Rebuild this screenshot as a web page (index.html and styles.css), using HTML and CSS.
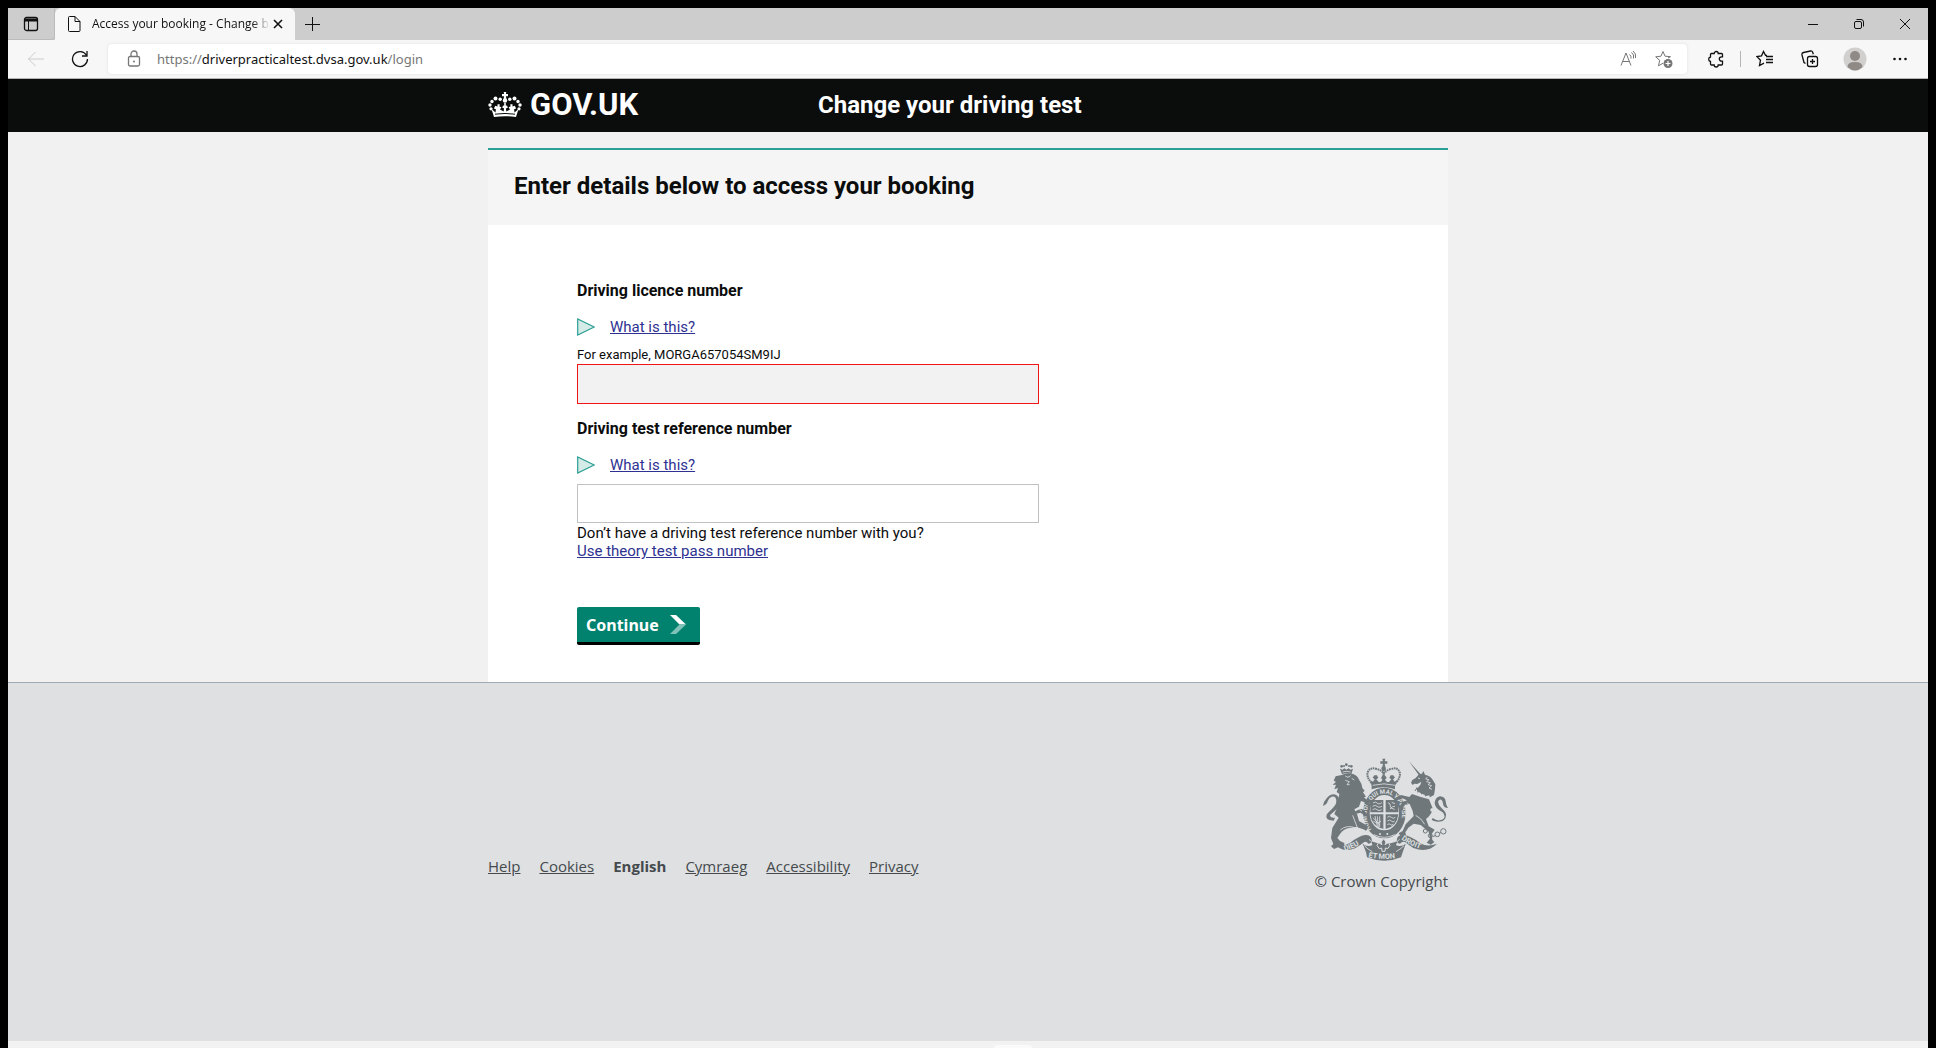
FILE: index.html
```html
<!DOCTYPE html>
<html lang="en">
<head>
<meta charset="utf-8">
<title>Access your booking - Change booking</title>
<link rel="stylesheet" href="styles.css">
</head>
<body>
<div class="window">
  <div class="tab-bar">
    <button class="tab-menu" type="button" aria-label="Tab actions">
      <svg width="16" height="16" viewBox="0 0 16 16"><rect x="1.5" y="1.5" width="13" height="13" rx="2" class="line firm"/><path d="M1.5 2.5h13v3h-13z"/><path d="M5.5 5v9.500" class="line"/></svg>
    </button>
    <div class="tab">
      <svg width="14" height="18" viewBox="0 0 14 18"><path d="M2.500 1.500h5.500l5 5v9a1 1 0 0 1-1 1H2.500a1 1 0 0 1-1-1v-13a1 1 0 0 1 1-1zM8 1.500v5h5" class="line"/></svg>
      <span class="tab-title">Access your booking - Change b</span>
      <button class="icon-button tab-close" type="button" aria-label="Close tab"><svg width="10" height="10" viewBox="0 0 10 10"><path d="M1 1l8 8M9 1l-8 8" class="line heavy"/></svg></button>
    </div>
    <button class="icon-button new-tab" type="button" aria-label="New tab"><svg width="16" height="16" viewBox="0 0 16 16"><path d="M8.500 1v14M1 8.500h15" class="line"/></svg></button>
    <div class="window-controls">
      <button class="icon-button" type="button" aria-label="Minimise"><svg width="12" height="12" viewBox="0 0 12 12"><path d="M1 6.500h10" class="line"/></svg></button>
      <button class="icon-button" type="button" aria-label="Restore"><svg width="12" height="12" viewBox="0 0 12 12"><rect x="1.500" y="3.500" width="7" height="7" rx="1.500" class="line"/><path d="M3.500 1.500H8a2.500 2.500 0 0 1 2.500 2.500v4.500" class="line"/></svg></button>
      <button class="icon-button" type="button" aria-label="Close window"><svg width="12" height="12" viewBox="0 0 12 12"><path d="M1 1l10 10M11 1L1 11" class="line"/></svg></button>
    </div>
  </div>

  <div class="toolbar">
    <div class="nav-buttons">
      <button class="icon-button disabled" type="button" aria-label="Back"><svg width="18" height="16" viewBox="0 0 18 16"><path d="M17 8H1.500M8.500 1l-7 7 7 7" class="line"/></svg></button>
      <button class="icon-button" type="button" aria-label="Refresh"><svg width="18" height="18" viewBox="0 0 18 18"><path d="M15.300 5A7.500 7.500 0 1 0 16.500 9M16 1v5h-5" class="line firm"/></svg></button>
    </div>
    <div class="address">
      <svg class="grey" width="14" height="18" viewBox="0 0 14 18"><rect x="1.500" y="6.500" width="11" height="9.500" rx="1.500" class="line firm"/><path d="M4 6.500V4a3 3 0 0 1 6 0v2.500" class="line firm"/><circle cx="7" cy="11.500" r="1"/></svg>
      <div class="url" role="textbox" aria-label="Address">https://<span class="host">driverpracticaltest.dvsa.gov.uk</span>/login</div>
      <button class="icon-button grey" type="button" aria-label="Read aloud"><svg width="18" height="18" viewBox="0 0 18 18"><path d="M2 15.500L7 3l5 12.500M3.600 11.500h6.800M10.500 4.500q2 1.500 1.500 4M12.500 2.500q3 2 2 6M14 1q3.500 2.500 2.500 7" class="line"/></svg></button>
      <button class="icon-button grey" type="button" aria-label="Add to favourites"><svg width="18" height="18" viewBox="0 0 18 18"><path d="M8 1.500l2 4.700 5.500.5M8 1.500L6 6.200l-5.300.6 4 3.500-1.200 5.500 4.500-2.600M13 8l2.500-1.300" class="line"/><circle cx="13" cy="13.500" r="4.500"/><path d="M13 11v5M10.500 13.500h5" class="cut"/></svg></button>
    </div>
    <div class="actions">
      <button class="icon-button" type="button" aria-label="Extensions"><svg width="16" height="18" viewBox="0 0 16 18"><path d="M3.500 3.500h2.700a2 2 0 0 1 4 0h3.300a1 1 0 0 1 1 1v2.300h-1a2.200 2.200 0 0 0 0 4.400h1v2.800a1 1 0 0 1-1 1h-3.300a2 2 0 0 1-4 0H3.500a1 1 0 0 1-1-1v-2.500a2.300 2.300 0 0 1 0-4.500V4.500a1 1 0 0 1 1-1z" class="line firm"/></svg></button>
      <span class="divider"></span>
      <button class="icon-button" type="button" aria-label="Favourites"><svg width="18" height="18" viewBox="0 0 18 18"><path d="M11 5.500L9.500 5.300 7.500 1.500l-2 4.300-4.500.8 3.500 3.600-1 5.300 4.500-2.300M10 6.500h7M10 9.500h7M10 12.500h7" class="line firm"/></svg></button>
      <button class="icon-button" type="button" aria-label="Collections"><svg width="18" height="18" viewBox="0 0 18 18"><rect x="6.500" y="6.500" width="10" height="10" rx="2" class="line firm"/><path d="M11.500 9v5M9 11.500h5M4.500 13.500L3 12.500 1 5q-.4-2 1.500-2.500L9.500 1q1.500-.3 2.200 1.200l.6 2" class="line firm"/></svg></button>
      <button class="icon-button" type="button" aria-label="Profile"><svg width="24" height="24" viewBox="0 0 24 24"><circle cx="12" cy="12" r="11.500" fill="#d2d0ce"/><circle cx="12" cy="9" r="5" fill="#8f8a86"/><path d="M4.500 20q0-5 7.500-5t7.500 5q-7.500 7-15 0z" fill="#8f8a86"/></svg></button>
      <button class="icon-button" type="button" aria-label="Settings and more"><svg width="16" height="4" viewBox="0 0 16 4"><circle cx="2.500" cy="2" r="1.300"/><circle cx="8" cy="2" r="1.300"/><circle cx="13.500" cy="2" r="1.300"/></svg></button>
    </div>
  </div>

  <header class="site-header">
    <div class="container header-grid">
      <a class="logo" href="#">
        <svg width="34" height="26" viewBox="0 0 34 26" aria-hidden="true">
          <path d="M15.700 0h2.600l-.4 2h2.100v2.200h-2.100l.5 3h-2.800l.5-3H14V2h2.100z"/>
          <circle cx="17" cy="8.500" r="2.200"/><circle cx="12.200" cy="7.200" r="1.700"/><circle cx="21.800" cy="7.200" r="1.700"/><circle cx="7.500" cy="6.500" r="2"/><circle cx="26.500" cy="6.500" r="2"/><circle cx="4" cy="9.500" r="1.700"/><circle cx="30" cy="9.500" r="1.700"/><circle cx="2" cy="13" r="1.700"/><circle cx="32" cy="13" r="1.700"/><circle cx="3" cy="16.800" r="1.600"/><circle cx="31" cy="16.800" r="1.600"/>
          <path d="M3.500 17l2.500 8q11-1.600 22 0l2.500-8-4 3.500-.4-3.200 2-.8-1.300-2.700-2.300.6v-2.200h-2.200l.2 2.300-1.900.7 1.400 2.400-3.600 2-.5-3.200 2-.9-1-2-1.100.3V11h-1.600v2.800l-1.100-.3-1 2 2 .9-.5 3.200-3.600-2 1.400-2.400-1.900-.7.200-2.300H9.500v2.200l-2.300-.6-1.300 2.700 2 .8-.4 3.200z"/>
          <path d="M7 22.200q10-1.500 20 0" fill="none" stroke="#0b0c0c" stroke-width="1"/>
        </svg>
        <span>GOV.UK</span>
      </a>
      <p class="service-name">Change your driving test</p>
    </div>
  </header>

  <main class="content">
    <div class="container">
      <div class="page-heading"><h1>Enter details below to access your booking</h1></div>
      <form class="login">
        <div class="field">
          <label for="licence">Driving licence number</label>
          <a class="help" href="#"><svg width="18" height="18" viewBox="0 0 18 18"><path d="M.700 1v16l16.500-8z"/></svg><span>What is this?</span></a>
          <p class="hint" id="licence-hint">For example, MORGA657054SM9IJ</p>
          <input id="licence" class="error" type="text" aria-describedby="licence-hint">
        </div>
        <div class="field reference">
          <label for="reference">Driving test reference number</label>
          <a class="help" href="#"><svg width="18" height="18" viewBox="0 0 18 18"><path d="M.700 1v16l16.500-8z"/></svg><span>What is this?</span></a>
          <input id="reference" type="text">
          <p class="alternative">Don’t have a driving test reference number with you?<br><a href="#">Use theory test pass number</a></p>
        </div>
        <button class="continue" type="submit">Continue
          <svg width="16" height="19" viewBox="0 0 16 19"><path d="M0 0h6l10 9.500H9.500z" fill="#fff"/><path d="M0 19h6l10-9.500H9.500z" fill="#80c2b8"/></svg>
        </button>
      </form>
    </div>
  </main>

  <footer class="site-footer">
    <div class="container footer-row">
      <nav class="footer-links">
        <a href="#">Help</a><a href="#">Cookies</a><strong>English</strong><a href="#">Cymraeg</a><a href="#">Accessibility</a><a href="#">Privacy</a>
      </nav>
      <a class="crown" href="#">
        <svg width="126" height="103" viewBox="66 52 378 309" aria-hidden="true">
          <defs>
            <path id="garter" d="M214 266A53 64 0 1 1 292 266"/>
            <path id="motto-left" d="M134 331Q168 322 198 299"/>
            <path id="motto-mid" d="M205 350Q253 360 304 349"/>
            <path id="motto-right" d="M304 296Q337 320 384 331"/>
          </defs>
          <!-- royal crown -->
          <path d="M247 54h9l-2 8h8v7h-8l2 9h-9l2-9h-8v-7h8z"/>
          <path d="M215 127q-16-17-12-32 7-17 27-10 14 4 21 13 8-9 22-13 20-7 26 10 4 15-12 32" fill="none" stroke="currentColor" stroke-width="6" stroke-dasharray="5 2"/>
          <path d="M251 80v38" stroke="currentColor" stroke-width="7" stroke-dasharray="5 2"/>
          <circle cx="251" cy="84" r="7"/>
          <path d="M211 119l8 4 5-7-6-5 5-7h8l4 8-6 4 7 8h6l6-7-5-5 4-7h9l4 7-5 5 6 7h6l7-8-6-4 4-8h8l5 7-6 5 5 7 8-4-7 18v9q-34-12-70 0v-9z"/>
          <path d="M218 134q34-9 68 0" fill="none" class="pale-line"/>
          <!-- garter and shield -->
          <ellipse cx="253" cy="217" rx="64" ry="76"/>
          <ellipse cx="253" cy="216" rx="44" ry="53" class="pale"/>
          <path d="M217 178h33v37h-39q-2-19 6-37zM257 178h32q8 18 6 37h-38zM211 221h39v44q-35-8-39-44zM257 221h38q-4 37-38 44z"/>
          <path d="M219 187q8-6 12 0t15-1M218 197q9-6 13 0t15 0M218 207q8-6 13 0t14 0M264 186q8 2 7 10t13 10M270 205q6-9 15-8M275 185l10 4M262 230q7-6 12 0t12 0M262 241q7-6 12 0t10 0M262 252q5-5 10 0t7-2M219 231l20 22M225 226l7 31M232 227l3 32M239 227v32M220 241q12 12 23 0" fill="none" class="pale-line"/>
          <path d="M222 282q31 16 62 0" fill="none" class="pale-line"/>
          <circle cx="240" cy="280" r="3" class="pale"/><circle cx="262" cy="280" r="3" class="pale"/>
          <text class="garter-text"><textPath href="#garter">HONI SOIT QUI MAL Y PENSE</textPath></text>
          <!-- lion -->
          <circle cx="139" cy="72" r="4"/><circle cx="125" cy="77" r="4"/><circle cx="154" cy="77" r="4"/><circle cx="132" cy="76" r="3"/><circle cx="147" cy="76" r="3"/>
          <path d="M120 84l8 3 5-4 6 4 7-4 5 4 8-3-5 16q-14-4-28 0z"/>
          <path d="M128 94q12-4 24 0" fill="none" class="pale-line"/>
          <path d="M125 103q18-10 36-2 12 5 17 18 9 12 9 23l7 8-5 5 9 13-6 2 11 10q9 8 5 17l-9-4-7-9-9-3-6 17-14 8 8 14 6 21 17 10q10 4 9 13l-5 6-8-4-20-7-23 3q-17 3-27 18l-8 12 8 9 13 6-1 15-16-3-14 6-9-8 7-7-7-18 4-30 19-31-13-11 9-21 6-39-8-6 4-12-11 4 5-14-10 1 10-10-7-3 6-13z"/>
          <path d="M101 240q-22 0-22-13c0-14 31-26 30-46q-1-16-14-13-9 4-12 14-2 9-14 14 2-14 11-23 10-13 23-12 16 4 16 22c-1 26-27 32-29 42q2 8 15 6z"/>
          <path d="M136 106l8 4 8-5M155 113l8 5M136 119l12 4-7 9h8" fill="none" class="pale-line"/>
          <path d="M180 203l-18 9M160 217q21-16 29-10l13 13q-4 8-11 3l-9-7-17 4zM154 251q16-8 27 7l14 6"/>
          <path d="M178 207l8 4M158 224l16 42M121 268q19-17 48-6" fill="none" class="pale-line"/>
          <!-- unicorn -->
          <path d="M327 62l37 41-5 4z"/>
          <path d="M357 101l9-2 4-8 5 11q16 3 23 15l8 14-1 14-3 18-15 8q-26-3-41-22l9-9q8-9 9-17l-12 7-9-1-5 4-5-7 4-8 10-6z"/>
          <path d="M354 112l6 2M382 109l-5 6 10 2-7 6 11 3-7 6 11 3-8 7 9 4" fill="none" class="pale-line"/>
          <path d="M345 146q14 20 44 23" fill="none" stroke="#dee0e2" stroke-width="7"/>
          <path d="M345 151l6-10 3 14 9-9 2 14 10-7 1 13 12-6" fill="none" stroke="currentColor" stroke-width="3"/>
          <path d="M336 160q24 9 51 16l12 30q-9 22-21 29l8 22 18 10-9 13 2 18 6 6-10 8-13-6 10-12-4-21-24-20-21-4-16 12-9 14 2 8-16 3-6-8 12-7 9-20 24-25-3-15-9-21-17 3-3 16-8-2-3-8 9-15 14-5-14-6-8 5-6-9 10-6 25 6z"/>
          <path d="M398 232q15 12 31 4 10-8-1-21-25-14-24-29 2-16 16-19 16 1 17 15 1 13 7 20-13 0-15-13-2-14-10-12-7 3-3 13c5 13 20 18 22 31q1 14-10 20-18 6-33-3z"/>
          <path d="M322 186q7 8 8 17M347 224q17 8 27 27M397 202l-4 8" fill="none" class="pale-line"/>
          <g fill="none" stroke="currentColor" stroke-width="3"><circle cx="376" cy="271" r="6"/><circle cx="391" cy="285" r="6"/><circle cx="412" cy="281" r="7"/><circle cx="430" cy="272" r="8"/><path d="M398 288l8-3M418 278l5-3"/></g>
          <circle cx="396" cy="208" r="5" class="pale"/><circle cx="389" cy="237" r="5" class="pale"/><circle cx="327" cy="202" r="4" class="pale"/>
          <!-- motto scroll -->
          <path d="M103 309q23 12 48-3 25-20 44-23 17-1 20 12 3 13-10 14-5-8-12-5-10 8-26 18-37 17-64-13z"/>
          <path d="M411 309q-30 12-52-3-27-20-48-23-18-1-20 12-3 13 9 14 7-8 15-5 10 8 25 18 44 16 71-13z"/>
          <path d="M188 309q11 10 29 5l-3-12q39 15 78 0l-4 12q17 5 29-5l-9 26-5 15q-50 21-102 0l-3-15z"/>
          <path d="M193 315q11 12 24 18M312 315q-12 12-24 18M207 296l8 7M299 296l-8 7" fill="none" class="pale-line"/>
          <path d="M251 294l7 10-3 8 10-6 5 8-7 10-7-2-1 10h-9l-1-10-7 2-7-10 5-8 10 6-3-8z" stroke="#dee0e2" stroke-width="3"/>
          <text><textPath href="#motto-left">DIEU</textPath></text>
          <text><textPath href="#motto-mid">ET MON</textPath></text>
          <text><textPath href="#motto-right">DROIT</textPath></text>
        </svg>
        <span>© Crown Copyright</span>
      </a>
    </div>
  </footer>
  <div class="taskbar"><span></span></div>
</div>
</body>
</html>
```
FILE: styles.css
```css
* { box-sizing: border-box; }

body {
  margin: 0;
  background: #000;
  color: #0b0c0c;
  font: 15px/18px Roboto, "Liberation Sans", sans-serif;
}

h1, p { margin: 0; }

button {
  border: 0;
  padding: 0;
  background: none;
  color: inherit;
  font: inherit;
}

svg { display: block; flex: none; fill: currentColor; }

.line { fill: none; stroke: currentColor; stroke-width: 1; }
.line.firm { stroke-width: 1.3; }
.line.heavy { stroke-width: 1.6; }
.cut { fill: none; stroke: #fff; stroke-width: 1.2; }

.window {
  display: flex;
  flex-direction: column;
  min-height: 100vh;
  padding: 8px 8px 0;
}

/* Browser tabs */
.tab-bar {
  display: flex;
  height: 32px;
  background: #cdcdcd;
  color: #111;
}

.tab-menu {
  display: grid;
  place-items: center;
  width: 47px;
  border-right: 1px solid #bbb;
  border-bottom: 1px solid #bbb;
  border-radius: 0 0 4px 0;
}

.tab {
  display: flex;
  align-items: center;
  gap: 11px;
  width: 240px;
  padding: 0 9px 0 12px;
  background: #f7f7f7;
  border-radius: 6px 6px 0 0;
  font: 12px/16px "Open Sans", "Noto Sans", sans-serif;
}

.tab-title {
  flex: 1;
  white-space: nowrap;
  -webkit-mask-image: linear-gradient(to right, #000 160px, transparent 178px);
  mask-image: linear-gradient(to right, #000 160px, transparent 178px);
}

.icon-button {
  display: grid;
  place-items: center;
  flex: none;
  width: 32px;
  height: 32px;
}

.tab-close { width: 16px; margin-left: -11px; }

.new-tab { width: 34px; }

.window-controls { display: flex; margin-left: auto; }
.window-controls .icon-button { width: 46px; }

/* Address bar */
.toolbar {
  display: flex;
  align-items: center;
  height: 39px;
  padding: 0 12px 0 6px;
  background: #f7f7f7;
  border-bottom: 1px solid #b5b5b5;
  color: #111;
}

.nav-buttons { display: flex; margin-right: 6px; }
.nav-buttons .icon-button { width: 44px; }
.disabled { color: #ccc; }

.address {
  display: flex;
  align-items: center;
  flex: 1;
  height: 30px;
  padding: 0 7px 0 19px;
  background: #fff;
  border-radius: 4px;
  box-shadow: 0 0 3px #ddd;
}

.address .icon-button { margin-left: 4px; }
.grey { color: #767676; }

.url {
  flex: 1;
  margin-left: 16px;
  color: #767676;
  font: 13px/18px "Noto Sans", "Open Sans", sans-serif;
}

.host { color: #111; }

.actions {
  display: flex;
  align-items: center;
  gap: 13px;
  margin-left: 13px;
}

.divider {
  width: 1px;
  height: 16px;
  margin: 0 -5px;
  background: #b5b5b5;
}

/* Page */
.container {
  width: 100%;
  max-width: 960px;
  margin: 0 auto;
}

.site-header {
  padding: 12px 0 13px;
  background: #0b0c0c;
  color: #fff;
}

.header-grid {
  display: grid;
  grid-template-columns: 330px 1fr;
  align-items: center;
}

.logo {
  display: flex;
  align-items: center;
  gap: 8px;
  color: #fff;
  font-size: 31px;
  font-weight: 700;
  line-height: 28px;
  text-decoration: none;
}

.service-name { font-size: 24px; font-weight: 700; line-height: 28px; }

.content {
  padding-top: 16px;
  background: #f1f1f1;
}

.page-heading {
  padding: 22px 26px 25px;
  background: #f5f5f5;
  border-top: 2px solid #2b9f94;
}

.page-heading h1 { font-size: 24px; line-height: 28px; }

.login { padding: 57px 89px 37px; background: #fff; }

.field {
  display: flex;
  flex-direction: column;
  align-items: flex-start;
}

.field.reference { margin-top: 16px; }

.field label { font-size: 16px; font-weight: 700; line-height: 18px; }

.help {
  display: flex;
  gap: 15px;
  margin-top: 18px;
  color: #2e3191;
}

.help svg { fill: #d5ebe8; stroke: #2b9f94; stroke-width: 1.2; }

.hint { margin-top: 10px; font-size: 13px; line-height: 18px; }

.field input {
  width: 100%;
  max-width: 462px;
  height: 39px;
  padding: 0 8px;
  border: 1px solid #bfc1c3;
  background: #fff;
  font: inherit;
}

.field input.error {
  height: 40px;
  border-color: #f01414;
  background: #f2f2f2;
}

.help + input { margin-top: 10px; }

.alternative { margin-top: 1px; }
.alternative a { color: #2e3191; }

.continue {
  display: flex;
  align-items: center;
  gap: 11px;
  height: 38px;
  margin-top: 47px;
  padding: 0 14px 0 9px;
  background: #00826f;
  border-bottom: 3px solid #000;
  border-radius: 2px;
  color: #fff;
  font: 700 16px/20px "Noto Sans", "Open Sans", sans-serif;
}

/* Footer */
.site-footer {
  flex: 1;
  padding: 75px 0 60px;
  background: #dee0e2;
  border-top: 1px solid #a1acb2;
  color: #454a4d;
  font-family: "Open Sans", "Noto Sans", sans-serif;
}

.footer-row {
  display: flex;
  align-items: flex-end;
  justify-content: space-between;
}

.footer-links {
  display: flex;
  gap: 19px;
  padding-bottom: 15px;
}

.footer-links a, .crown { color: #454a4d; }

.crown {
  display: flex;
  flex-direction: column;
  align-items: flex-end;
  gap: 11px;
  text-decoration: none;
}

.crown svg { color: #6f777b; }
.crown .pale { fill: #dee0e2; }
.crown .pale-line { stroke: #dee0e2; stroke-width: 2.5; }
.crown text { fill: #dee0e2; font: 700 22px Roboto, sans-serif; }
.crown .garter-text { font-size: 18px; }

.taskbar {
  display: flex;
  justify-content: center;
  height: 7px;
  background: #f2f2f2;
}

.taskbar span {
  width: 38px;
  height: 3px;
  margin: 4px 0 0 90px;
  background: #fafafa;
  border-radius: 4px 4px 0 0;
}
```
